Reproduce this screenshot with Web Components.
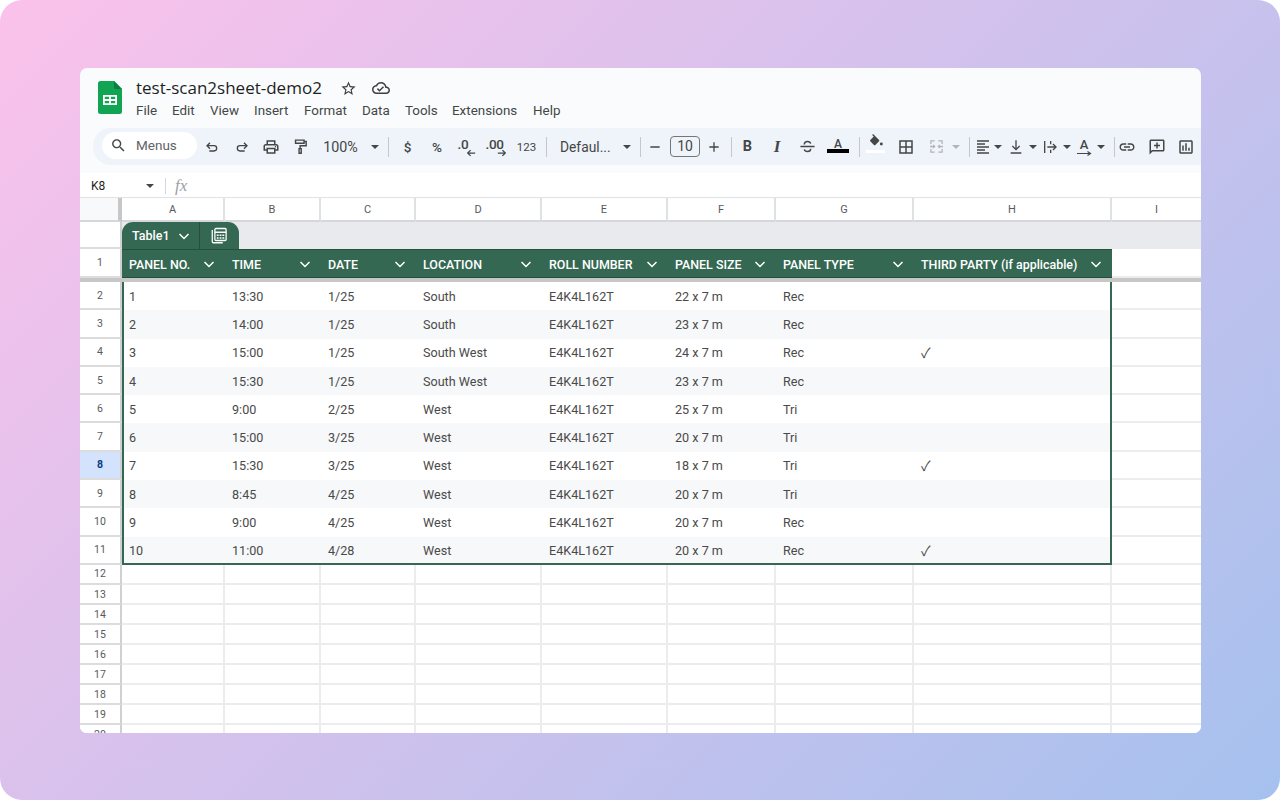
<!DOCTYPE html>
<html><head><meta charset="utf-8"><title>Sheet</title>
<style>html,body{margin:0;padding:0;background:#fff;font-family:Roboto,"Liberation Sans",sans-serif}</style></head>
<body>
<demo-stage>
  <sheet-window>
    <sheet-header doc="test-scan2sheet-demo2"></sheet-header>
    <sheet-toolbar></sheet-toolbar>
    <formula-bar cell="K8"></formula-bar>
    <sheet-grid></sheet-grid>
  </sheet-window>
</demo-stage>
<script>
const ic={
search:'<path fill="currentColor" d="M15.5 14h-.79l-.28-.27C15.41 12.59 16 11.11 16 9.5 16 5.91 13.09 3 9.5 3S3 5.91 3 9.5 5.91 16 9.5 16c1.61 0 3.09-.59 4.23-1.57l.27.28v.79l5 4.99L20.49 19l-4.99-5zm-6 0C7.01 14 5 11.99 5 9.5S7.01 5 9.5 5 14 7.01 14 9.5 11.99 14 9.5 14z"/>',
star:'<path fill="currentColor" d="M22 9.24l-7.19-.62L12 2 9.19 8.63 2 9.24l5.46 4.73L5.82 21 12 17.27 18.18 21l-1.63-7.03L22 9.24zM12 15.4l-3.76 2.27 1-4.28-3.32-2.88 4.38-.38L12 6.1l1.71 4.04 4.38.38-3.32 2.88 1 4.28L12 15.4z"/>',
cloud:'<path fill="currentColor" d="M19.35 10.04C18.67 6.59 15.64 4 12 4 9.11 4 6.6 5.64 5.35 8.04 2.34 8.36 0 10.91 0 14c0 3.31 2.69 6 6 6h13c2.76 0 5-2.24 5-5 0-2.64-2.05-4.78-4.65-4.96zM19 18H6c-2.21 0-4-1.79-4-4 0-2.05 1.53-3.76 3.56-3.97l1.07-.11.5-.95C8.08 7.14 9.94 6 12 6c2.62 0 4.88 1.86 5.39 4.43l.3 1.5 1.53.11c1.56.1 2.78 1.41 2.78 2.96 0 1.65-1.35 3-3 3zm-9-3.82l-2.09-2.09L6.5 13.5 10 17l6.01-6.01-1.41-1.41z"/>',
undo:'<path fill="none" stroke="currentColor" stroke-width="2" d="M9 5.5 4.5 10 9 14.5M4.5 10H15a4 4 0 0 1 0 8H8"/>',
redo:'<path fill="none" stroke="currentColor" stroke-width="2" d="M15 5.5 19.5 10 15 14.5M19.5 10H9a4 4 0 0 0 0 8h7"/>',
print:'<path fill="currentColor" d="M19 8h-1V3H6v5H5c-1.66 0-3 1.34-3 3v6h4v4h12v-4h4v-6c0-1.66-1.34-3-3-3zM8 5h8v3H8V5zm8 12v2H8v-4h8v2zm2-2v-2H6v2H4v-4c0-.55.45-1 1-1h14c.55 0 1 .45 1 1v4h-2z"/><circle cx="18" cy="11.5" r="1" fill="currentColor"/>',
paint:'<path fill="none" stroke="currentColor" stroke-width="2" d="M5 3h12v4.500H5zM17 5h3v6h-8.500v4M10 15h3v6.500h-3z"/>',
minus:'<path fill="currentColor" d="M5 11h14v2H5z"/>',
plus:'<path fill="currentColor" d="M19 13h-6v6h-2v-6H5v-2h6V5h2v6h6z"/>',
strike:'<path fill="none" stroke="currentColor" stroke-width="2" d="M2 12h20M7.500 9c0-2.500 2-4 4.500-4s4 1 4.500 3M16.500 15c0 2.500-2 4-4.500 4s-4-1-4.500-3"/>',
fill:'<path fill="currentColor" d="M16.560 8.940 7.620 0 6.210 1.410l2.380 2.380-5.150 5.150c-.59.59-.59 1.540 0 2.120l5.500 5.500c.29.290.68.440 1.060.440s.77-.150 1.060-.440l5.500-5.500c.590-.580.590-1.530 0-2.120z"/><circle cx="20" cy="15" r="2.200" fill="currentColor"/>',
border:'<path fill="currentColor" d="M3 3v18h18V3H3zm8 16H5v-6h6v6zm0-8H5V5h6v6zm8 8h-6v-6h6v6zm0-8h-6V5h6v6z"/>',
merge:'<path fill="none" stroke="currentColor" stroke-width="2" d="M9 3H3v5M3 10.500v3M3 16v5h6M15 3h6v5M21 10.500v3M21 16v5h-6M4 12h5M6.500 9.500 9 12l-2.500 2.500M20 12h-5M17.500 9.500 15 12l2.500 2.500"/>',
align:'<path fill="currentColor" d="M3 2h18v2H3zM3 6.500h12v2H3zM3 11h18v2H3zM3 15.500h12v2H3zM3 20h18v2H3z"/>',
valign:'<path fill="none" stroke="currentColor" stroke-width="2" d="M12 2v14M6.500 10.500 12 16l5.500-5.500M4 21h16"/>',
wrap:'<path fill="none" stroke="currentColor" stroke-width="2" d="M4 3v18M13 3v5M13 16v5M8 12h13M16.500 7.500 21 12l-4.500 4.500"/>',
link:'<path fill="currentColor" d="M3.900 12c0-1.710 1.390-3.100 3.100-3.100h4V7H7c-2.760 0-5 2.240-5 5s2.240 5 5 5h4v-1.900H7c-1.710 0-3.100-1.390-3.100-3.100zM8 13h8v-2H8v2zm9-6h-4v1.900h4c1.710 0 3.100 1.390 3.100 3.100s-1.390 3.100-3.100 3.100h-4V17h4c2.760 0 5-2.240 5-5s-2.240-5-5-5z"/>',
comment:'<path fill="currentColor" d="M20 2H4c-1.100 0-2 .9-2 2v18l4-4h14c1.100 0 2-.9 2-2V4c0-1.100-.9-2-2-2zm0 14H5.170L4 17.170V4h16v12zM11 14h2v-3h3V9h-3V6h-2v3H8v2h3z"/>',
chart:'<path fill="currentColor" d="M19 3H5c-1.100 0-2 .9-2 2v14c0 1.100.9 2 2 2h14c1.100 0 2-.9 2-2V5c0-1.100-.9-2-2-2zm0 16H5V5h14v14zM7 10h2v7H7zm4-3h2v10h-2zm4 6h2v4h-2z"/>',
arrL:'<path fill="none" stroke="currentColor" stroke-width="3" d="M22 12H6M11 5l-7 7 7 7"/>',
arrR:'<path fill="none" stroke="currentColor" stroke-width="3" d="M2 12h16M13 5l7 7-7 7"/>',
calc:'<path fill="none" stroke="currentColor" stroke-width="1.700" d="M3 4v15.500A1.500 1.500 0 0 0 4.500 21H17"/><rect x="6.500" y="2" width="15" height="16" rx="1.500" fill="none" stroke="currentColor" stroke-width="1.700"/><path fill="currentColor" d="M6.500 6h15v2h-15zM9 10h2.500v2H9zM12.800 10h2.500v2h-2.500zM16.500 10H19v2h-2.500zM9 13.500h2.500v2H9zM12.800 13.500h2.500v2h-2.500zM16.500 13.500H19v2h-2.500z"/>'
};
const svg=(n,s=16,c='')=>`<svg viewBox="0 0 24 24" width="${s}" height="${s}" style="flex:none;display:block;${c}">${ic[n]}</svg>`;

customElements.define('demo-stage',class extends HTMLElement{connectedCallback(){if(this.shadowRoot)return;
 this.attachShadow({mode:'open'}).innerHTML=`<style>:host{display:block;width:1280px;height:800px;box-sizing:border-box;padding:68px 79px 67px 80px;background:linear-gradient(135deg,#fbc2eb 0%,#a6c1ee 100%);border-radius:22px;overflow:hidden}</style><slot></slot>`}});

customElements.define('sheet-window',class extends HTMLElement{connectedCallback(){if(this.shadowRoot)return;
 this.attachShadow({mode:'open'}).innerHTML=`<style>:host{display:flex;flex-direction:column;height:665px;background:#f9fbfd;border-radius:7px;overflow:hidden;color:#444746}</style><slot></slot>`}});

customElements.define('sheet-header',class extends HTMLElement{connectedCallback(){if(this.shadowRoot)return;
 const menus=[['File',36],['Edit',38],['View',44],['Insert',50],['Format',58],['Data',43],['Tools',47],['Extensions',81],['Help',30]];
 this.attachShadow({mode:'open'}).innerHTML=`<style>
 :host{display:flex;height:60px;box-sizing:border-box;padding:13px 0 0 18px;gap:14px;flex:none}
 .logo{flex:none;width:24px;height:33px}
 .col{display:flex;flex-direction:column}
 .top{display:flex;align-items:center;height:20px;margin-top:-3px}
 .t{font:400 17px/20px "Open Sans",Roboto,sans-serif;color:#1f1f1f;width:204px;white-space:nowrap}
 .menus{display:flex;margin-top:4px;font:13.400px/17px Roboto,sans-serif;color:#444746}
 .menus span{display:block;flex:none}
 </style>
 <svg class="logo" viewBox="0 0 24 33"><path fill="#11a453" d="M2.500 0H16l8 8v22.500a2.500 2.500 0 0 1-2.500 2.500h-19A2.500 2.500 0 0 1 0 30.500v-28A2.500 2.500 0 0 1 2.500 0z"/><path fill="#0b7f3e" d="M16 0l8 8h-6a2 2 0 0 1-2-2z"/><path fill="#fff" d="M5 14h14v10H5zM6.800 15.800v2.300h4.300v-2.300zm6.100 0v2.300h4.300v-2.300zm-6.100 4.100v2.300h4.300v-2.300zm6.100 0v2.300h4.300v-2.300z" fill-rule="evenodd"/></svg>
 <div class="col"><div class="top"><span class="t">${this.getAttribute('doc')}</span>${svg('star',17,'color:#3c4043')}<span style="width:15px"></span>${svg('cloud',18,'color:#3c4043')}</div>
 <div class="menus">${menus.map(([m,w])=>`<span style="width:${w}px">${m}</span>`).join('')}</div></div>`}});

customElements.define('tool-item',class extends HTMLElement{connectedCallback(){if(this.shadowRoot)return;
 this.attachShadow({mode:'open'}).innerHTML=`<style>:host{display:flex;align-items:center;justify-content:center;flex:none;height:100%;color:#444746;font:12px Roboto,sans-serif}</style><slot></slot>`;
 this.style.width=this.getAttribute('w')+'px'}});

customElements.define('sheet-toolbar',class extends HTMLElement{connectedCallback(){if(this.shadowRoot)return;
 const I=(w,h)=>`<tool-item w="${w}">${h}</tool-item>`;
 const ar=(w,c='#444746')=>I(w,`<i style="display:block;width:0;height:0;border:4px solid transparent;border-top:4.500px solid ${c};border-bottom:0"></i>`);
 const sep=w=>I(w,`<i style="display:block;width:1px;height:20px;background:#c7c7c7"></i>`);
 const dec=(t,a)=>I(a[0],`<span style="position:relative;display:block;width:24px;height:20px"><b style="position:absolute;left:${a[1]}px;top:0;font:500 13.500px/14px Roboto;letter-spacing:-.3px">${t}</b><svg viewBox="0 0 24 24" width="10" height="10" style="position:absolute;left:${a[3]}px;top:11px">${ic[a[2]]}</svg></span>`);
 const items=[
 I(30,svg('undo',16)),I(29,svg('redo',16)),I(30,svg('print',18)),I(29,svg('paint',17)),
 I(51,'<span style="font-size:14.300px;padding-top:1px">100%</span>'),ar(18),sep(9),
 I(29,'<span style="font:500 13.500px Roboto">$</span>'),I(30,'<span style="font:500 13.500px Roboto">%</span>'),
 dec('.0',[29,3,'arrL',11]),dec('.00',[31,1,'arrR',12]),I(29,'<span style="font:400 11.500px Roboto">123</span>'),sep(10),
 I(67,'<span style="font-size:13.800px;width:49px;white-space:nowrap">Defaul...</span>'),ar(18),sep(9),
 I(20,svg('minus',16)),
 I(35,'<span style="display:block;box-sizing:border-box;width:30px;height:21px;border:1px solid #747775;border-radius:4px;text-align:center;font:14px/19px Roboto;margin-left:5px">10</span>'),
 I(28,svg('plus',16)),sep(7),
 I(25,'<span style="font:700 14.500px Roboto;color:#444746">B</span>'),
 I(34,'<span style="font:italic 700 17px \'Liberation Serif\',serif;color:#444746">I</span>'),
 I(27,svg('strike',17)),
 I(34,'<span style="display:flex;flex-direction:column;align-items:center;width:22px;font:500 12px/9px Roboto;color:#444746">A<i style="display:block;width:22px;height:4px;background:#000"></i></span>'),
 sep(8),
 I(25,`<span style="display:flex;flex-direction:column;align-items:center;width:19px;margin-top:-6px">${svg('fill',16)}<i style="display:block;width:19px;height:3px;background:#fff"></i></span>`),
 I(35,svg('border',18)),I(26,svg('merge',15,'color:#b1b5b9')),ar(14,'#b1b5b9'),sep(12),
 I(15,svg('align',16)),ar(16),I(19,svg('valign',16)),ar(16),I(18,svg('wrap',16)),ar(16),
 I(18,`<span style="display:flex;flex-direction:column;align-items:center;font:500 13px/12px Roboto;width:15px;padding-top:1px">A<svg viewBox="0 0 15 5" width="15" height="5" style="display:block"><path d="M0 2.500h13M10.500 .5l3 2-3 2" fill="none" stroke="#444746" stroke-width="1.200"/></svg></span>`),ar(16),sep(10),
 I(16,svg('link',18)),I(44,svg('comment',18)),I(14,svg('chart',18))
 ].join('');
 this.attachShadow({mode:'open'}).innerHTML=`<style>
 :host{display:flex;flex:none;align-items:center;height:37px;margin-left:13px;background:#eff3fa;border-radius:18px 0 0 18px;padding-left:9px;box-sizing:border-box;overflow:hidden}
 .s{flex:none;box-sizing:border-box;width:95px;height:27px;margin-top:-2px;border-radius:14px;background:#fff;display:flex;align-items:center;padding-left:8px;gap:9px;font:13.500px Roboto,sans-serif;color:#5f6368}
 .s svg{color:#444746;flex:none}
 .s span{margin-top:-1px}
 </style><div class="s">${svg('search',17)}<span>Menus</span></div>${items}`}});

customElements.define('formula-bar',class extends HTMLElement{connectedCallback(){if(this.shadowRoot)return;
 this.attachShadow({mode:'open'}).innerHTML=`<style>
 :host{display:flex;align-items:center;flex:none;height:25px;margin-top:8px;padding-top:1px;background:#fff;box-sizing:border-box;border-bottom:1px solid #e0e2e4;font:12px Roboto,sans-serif;color:#1f1f1f}
 .n{width:55px;padding-left:11px;flex:none}
 .a{flex:none;width:0;height:0;border:4px solid transparent;border-top:4.500px solid #444746;border-bottom:0;margin-right:11px}
 .d{flex:none;width:1px;height:16px;background:#d5d7da;margin-right:9px}
 .f{font:italic 17px "Liberation Serif",serif;color:#9aa0a6}
 </style><span class="n">${this.getAttribute('cell')}</span><i class="a"></i><i class="d"></i><span class="f">fx</span>`}});

customElements.define('grid-row',class extends HTMLElement{connectedCallback(){if(this.shadowRoot)return;
 this.attachShadow({mode:'open'}).innerHTML=`<style>:host{display:grid;grid-template-columns:42px 103px 96px 95px 126px 126px 108px 138px 198px 89px;flex:none;height:var(--h,20px)}</style><slot></slot>`}});

customElements.define('sheet-grid',class extends HTMLElement{connectedCallback(){if(this.shadowRoot)return;
 const cols='ABCDEFGHI'.split('');
 const heads=['PANEL NO.','TIME','DATE','LOCATION','ROLL NUMBER','PANEL SIZE','PANEL TYPE','THIRD PARTY (if applicable)'];
 const D=[['1','13:30','1/25','South','22','Rec',''],['2','14:00','1/25','South','23','Rec',''],['3','15:00','1/25','South West','24','Rec','✓'],['4','15:30','1/25','South West','23','Rec',''],['5','9:00','2/25','West','25','Tri',''],['6','15:00','3/25','West','20','Tri',''],['7','15:30','3/25','West','18','Tri','✓'],['8','8:45','4/25','West','20','Tri',''],['9','9:00','4/25','West','20','Rec',''],['10','11:00','4/28','West','20','Rec','✓']];
 const chev='<svg class="cv" viewBox="0 0 12 12" width="12" height="12"><path d="M1.500 4 6 8.500 10.500 4" fill="none" stroke="#fff" stroke-width="1.500"/></svg>';
 let h=`<grid-row style="--h:24px"><div class="corner"></div>${cols.map(c=>`<div class="ch">${c}</div>`).join('')}</grid-row>`;
 h+=`<grid-row style="--h:27px"><div class="rh"></div><div class="strip">
   <div class="tab"><span class="tn">Table1${chev}</span><span class="tc">${svg('calc',18)}</span></div>
 </div></grid-row>`;
 h+=`<grid-row style="--h:29px"><div class="rh">1</div>${heads.map(t=>`<div class="th"><span>${t}</span>${chev}</div>`).join('')}<div class="gc" style="border-right:0"></div></grid-row>`;
 h+=`<div class="freeze"></div>`;
 D.forEach((r,i)=>{const row=i+2;const v=[r[0],r[1],r[2],r[3],'E4K4L162T',r[4]+' x 7 m',r[5],r[6]];
  h+=`<grid-row style="--h:28.300px"><div class="rh${row==8?' sel':''}">${row}</div>${v.map((t,j)=>`<div class="td${i%2?' alt':''}${j==0?' first':''}${j==7?' last':''}${i==9?' bot':''}">${t=='✓'?'<span class="ck">✓</span>':t}</div>`).join('')}<div class="gc" style="border-right:0"></div></grid-row>`});
 for(let n=12;n<=20;n++)h+=`<grid-row style="--h:20.050px"><div class="rh sm">${n}</div>${cols.map((c,i)=>`<div class="gc"${i==8?' style="border-right:0"':''}></div>`).join('')}</grid-row>`;
 this.attachShadow({mode:'open'}).innerHTML=`<style>
 :host{display:flex;flex-direction:column;flex:1;min-height:0;background:#fff;overflow:hidden;font:12.600px Roboto,sans-serif;color:#444746}
 .corner{background:#f8f9fa;border-right:4px solid #c7c7c7;border-bottom:2px solid #d5d7da;box-sizing:border-box}
 .ch{display:flex;align-items:center;justify-content:center;padding-top:1px;font-size:11px;color:#575a5d;border-right:2px solid #e0e1e3;border-bottom:2px solid #d5d7da;box-sizing:border-box;background:#fff}
 .ch:last-child{border-right:0}
 .rh{display:flex;align-items:center;justify-content:center;font-size:10.500px;color:#575a5d;background:#fff;border-right:2px solid #cfd0d2;border-bottom:2px solid #dcdcdc;box-sizing:border-box}
 .rh.sel{background:#d3e3fd;color:#0b3a82;font-weight:700}
 .strip{grid-column:2/11;background:#e8eaed;display:flex;align-items:flex-end}
 .tab{display:flex;align-items:center;height:27px;width:117px;background:#356853;border-radius:11px 11px 0 0;color:#fff;font:500 12.500px Roboto,sans-serif;box-sizing:border-box}
 .tn{display:flex;align-items:center;gap:8px;padding-left:10px;width:67px;height:100%;border-right:1px solid #264f3d;flex:none;white-space:nowrap}
 .tc{display:flex;align-items:center;justify-content:center;flex:1;color:#fff;padding-right:1px}
 .th{display:flex;align-items:center;justify-content:space-between;padding:1px 10px 0 7px;background:#356853;color:#fff;font-weight:500;font-size:12.450px;white-space:nowrap;box-sizing:border-box;border-bottom:1px solid #26503d;border-top:1px solid #26503d}
 .cv{flex:none}
 .freeze{flex:none;height:4px;background:#c7c7c7}
 .td{display:flex;align-items:center;padding-left:7px;box-sizing:border-box;color:#4a4a4a;background:#fff;white-space:nowrap}
 .td.alt{background:#f6f8f9}
 .td.first{border-left:2px solid #356853;padding-left:5px}
 .td.last{border-right:2px solid #356853}
 .td.bot{border-bottom:2px solid #356853;padding-top:2px}
 .ck{font:14px "Noto Sans CJK SC","DejaVu Sans",sans-serif;margin-top:-2px}
 .gc{border-right:2px solid #ececec;border-bottom:2px solid #ececec;box-sizing:border-box}
 </style>${h}`}});
</script>
</body></html>
